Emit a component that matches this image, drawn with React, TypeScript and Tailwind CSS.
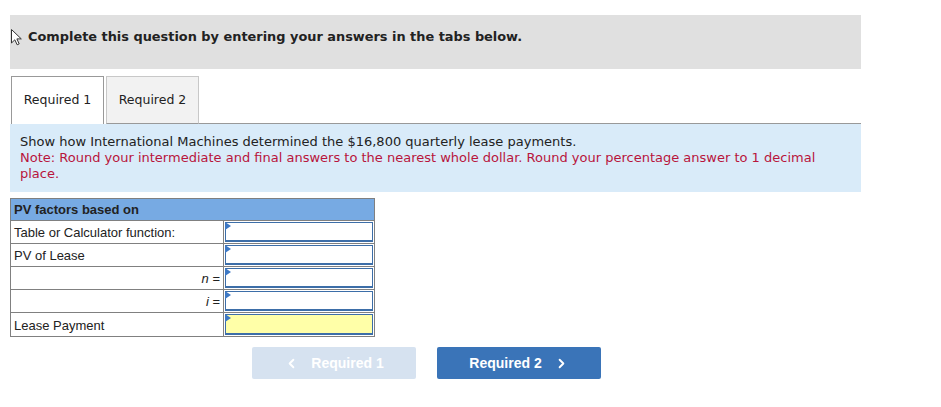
import React from "react";
import { ChevronLeft, ChevronRight } from "lucide-react";

function Pointer() {
  return (
    <svg width="13" height="18" viewBox="0 0 13 18" className="shrink-0">
      <path
        d="M1.5 1.5 L1.5 15 L4.8 11.8 L7.2 16.8 L9.2 15.9 L6.9 10.9 L11.3 10.9 Z"
        fill="white"
        stroke="#333"
        strokeWidth="1"
        strokeLinejoin="round"
      />
    </svg>
  );
}

function InputCell({ yellow = false }: { yellow?: boolean }) {
  return (
    <div className="relative h-full p-[1px]">
      <div
        className={`h-full border border-[#3d6ea8] border-b-2 ${yellow ? "bg-[#ffffa8]" : "bg-white"}`}
      />
      <span className="absolute left-[1px] top-[1px] w-0 h-0 border-y-[4px] border-y-transparent border-l-[6px] border-l-[#3d78c4]" />
    </div>
  );
}

const rows: { label: React.ReactNode; right?: boolean; yellow?: boolean }[] = [
  { label: "Table or Calculator function:" },
  { label: "PV of Lease" },
  { label: <span><i>n</i> =</span>, right: true },
  { label: <span><i>i</i> =</span>, right: true },
  { label: "Lease Payment", yellow: true },
];

export default function App() {
  return (
    <div className="w-[941px] h-[407px] bg-white pt-[15px] pl-[10px]">
      <div className="w-[851px]">
        <div className="h-[54px] bg-[#e0e0e0] flex items-center gap-[5px] pb-[10px]">
          <Pointer />
          <span className="font-['DejaVu_Sans',sans-serif] font-bold text-[12.9px] text-[#222]">
            Complete this question by entering your answers in the tabs below.
          </span>
        </div>

        <div className="mt-[7px] flex items-end h-[48px]">
          <div className="ml-[1px] w-[93px] h-[48px] bg-white border border-[#999] border-b-0 flex items-center justify-center font-['DejaVu_Sans',sans-serif] text-[12.5px] text-[#222]">
            Required 1
          </div>
          <div className="ml-[2px] w-[93px] h-[48px] bg-[#f2f2f2] border border-[#c8c8c8] border-b-[#999] flex items-center justify-center font-['DejaVu_Sans',sans-serif] text-[12.5px] text-[#222]">
            Required 2
          </div>
          <div className="flex-1 border-b border-[#999]" />
        </div>

        <div className="bg-[#d9ebf9] px-[10px] pt-[10px] pb-[10px] font-['DejaVu_Sans',sans-serif] text-[13px] leading-[16px]">
          <p className="text-[#222]">
            Show how International Machines determined the $16,800 quarterly lease payments.
          </p>
          <p className="text-[#b8153c]">
            Note: Round your intermediate and final answers to the nearest whole dollar. Round your percentage answer to 1 decimal place.
          </p>
        </div>

        <div className="mt-[6px] w-[365px] border border-[#808080] font-['Liberation_Sans',Arial,sans-serif] text-[13px] text-[#222]">
          <div className="h-[22px] bg-[#77aae3] border-b border-[#808080] flex items-center pl-[3px] pt-[1px] font-bold text-[13px]">
            PV factors based on
          </div>
          {rows.map((r, i) => (
            <div
              key={i}
              className={`grid grid-cols-[213px_1fr] h-[23px] ${i < rows.length - 1 ? "border-b border-[#808080]" : ""}`}
            >
              <div
                className={`border-r border-[#808080] flex items-center pt-[2px] ${r.right ? "justify-end pr-[3px]" : "pl-[3px]"}`}
              >
                {r.label}
              </div>
              <InputCell yellow={r.yellow} />
            </div>
          ))}
        </div>

        <div className="mt-[10px] flex gap-[21px] pl-[242px] font-['Liberation_Sans',Arial,sans-serif] font-bold text-[14px] text-white">
          <div className="w-[164px] h-[32px] rounded-[2px] bg-[#d6e2f0] flex items-center justify-center gap-[12px]">
            <ChevronLeft size={15} strokeWidth={3} />
            <span>Required 1</span>
          </div>
          <div className="w-[164px] h-[32px] rounded-[2px] bg-[#3a74b8] flex items-center justify-center gap-[12px]">
            <span>Required 2</span>
            <ChevronRight size={15} strokeWidth={3} />
          </div>
        </div>
      </div>
    </div>
  );
}
